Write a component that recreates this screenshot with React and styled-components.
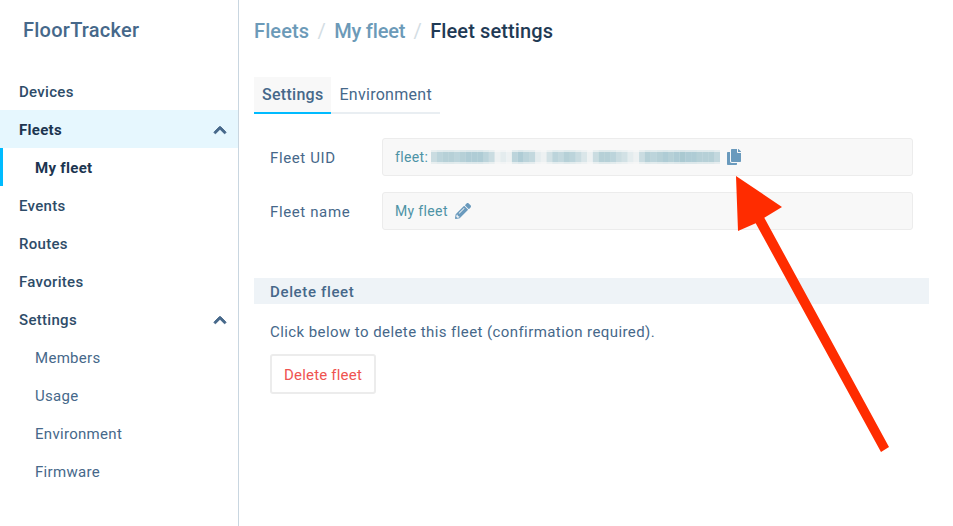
import styled, { createGlobalStyle } from 'styled-components';
import { FaChevronUp, FaCopy, FaPencilAlt } from 'react-icons/fa';

const GlobalStyle = createGlobalStyle`
  html, body {
    margin: 0;
    padding: 0;
    background: #fff;
  }
  body {
    font-family: Roboto, "Liberation Sans", sans-serif;
    color: #3f6080;
  }
`;

const Page = styled.div`
  position: relative;
  display: flex;
  width: 953px;
  height: 526px;
  overflow: hidden;
`;

const Sidebar = styled.nav`
  flex: 0 0 239px;
  box-sizing: border-box;
  border-right: 1px solid #c9d6e0;
`;

const Logo = styled.div`
  height: 72px;
  padding: 19px 0 0 23px;
  box-sizing: border-box;
  font-size: 20px;
  line-height: 22px;
  font-weight: 500;
  letter-spacing: 0.25px;
  color: #46688a;
`;

const NavItem = styled.div`
  position: relative;
  display: flex;
  align-items: center;
  justify-content: space-between;
  box-sizing: border-box;
  height: 38px;
  padding: 2px 11px 0 ${(p) => (p.$sub ? 35 : 19)}px;
  font-size: 15px;
  letter-spacing: 0.3px;
  color: ${(p) => {
    if (p.$current || p.$open) return '#1c3550';
    return p.$sub ? '#46688a' : '#2e4c69';
  }};
  background: ${(p) => (p.$open ? '#e6f7fe' : 'transparent')};
  font-weight: ${(p) => (p.$current || p.$open ? 700 : p.$sub ? 400 : 500)};

  ${(p) =>
    p.$current &&
    `&::before {
      content: '';
      position: absolute;
      left: 0;
      top: 0;
      bottom: 0;
      width: 3px;
      background: #00bbff;
    }`}

  svg {
    width: 14px;
    height: 14px;
    color: #46688a;
    stroke: currentColor;
    stroke-width: 36px;
  }
`;

const Main = styled.main`
  flex: 1;
  padding: 0 24px 0 15px;
`;

const Breadcrumb = styled.div`
  display: flex;
  align-items: center;
  height: 62px;
  font-size: 20px;
  font-weight: 500;
  letter-spacing: 0.12px;
`;

const Crumb = styled.span`
  color: ${(p) => (p.$current ? '#1f3a55' : '#6c9ab8')};
  letter-spacing: ${(p) => (p.$narrow ? '-0.2px' : 'inherit')};
`;

const CrumbSep = styled.span`
  width: 25px;
  text-align: center;
  font-weight: 400;
  color: #d3dde4;
`;

const Tabs = styled.div`
  display: flex;
  width: 186px;
  margin-top: 15px;
  border-bottom: 2px solid #e9eef2;
`;

const Tab = styled.div`
  height: 35px;
  margin-bottom: -2px;
  padding: 0 8px;
  display: flex;
  align-items: center;
  font-size: 16px;
  letter-spacing: 0.28px;
  color: #46688a;
  background: ${(p) => (p.$active ? '#f8f8f8' : 'transparent')};
  border-bottom: 2px solid ${(p) => (p.$active ? '#00bbff' : 'transparent')};
  font-weight: ${(p) => (p.$active ? 500 : 400)};
`;

const Form = styled.div`
  display: flex;
  flex-direction: column;
  gap: 16px;
  margin-top: 24px;
  padding-left: 16px;
`;

const FieldRow = styled.div`
  display: flex;
  align-items: center;
`;

const FieldLabel = styled.div`
  width: 112px;
  padding-top: 1px;
  font-size: 15px;
  letter-spacing: 0.62px;
  color: #46688a;
`;

const FieldValue = styled.div`
  display: flex;
  align-items: center;
  width: 531px;
  height: 38px;
  box-sizing: border-box;
  padding: 0 12px;
  background: #f8f8f8;
  border: 1px solid #ececec;
  border-radius: 3px;
  font-size: 14px;
  letter-spacing: 0.35px;
  color: #4d93a6;

  svg {
    flex: none;
    color: #6a9abd;
  }
`;

const Mosaic = styled.svg`
  display: block;
  margin-left: 3px;
  margin-right: 6px;
  filter: blur(0.6px);
`;

const SectionHeader = styled.div`
  box-sizing: border-box;
  height: 26px;
  margin-top: 48px;
  padding: 2px 0 0 16px;
  display: flex;
  align-items: center;
  background: #eef3f7;
  font-size: 15px;
  font-weight: 500;
  letter-spacing: 0.65px;
  color: #46688a;
`;

const Section = styled.div`
  padding-left: 16px;
`;

const Hint = styled.p`
  margin: 19px 0 13px;
  font-size: 15px;
  line-height: 18px;
  letter-spacing: 0.42px;
  color: #46688a;
`;

const DangerButton = styled.button`
  width: 106px;
  height: 40px;
  padding: 2px 0 0;
  background: #fff;
  border: 2px solid #ececec;
  border-radius: 3px;
  font-family: inherit;
  font-size: 15px;
  letter-spacing: 0.2px;
  color: #ef5350;
`;

const Arrow = styled.svg`
  position: absolute;
  left: 0;
  top: 0;
  pointer-events: none;
`;

const navItems = [
  { label: 'Devices' },
  { label: 'Fleets', open: true, chevron: true },
  { label: 'My fleet', sub: true, current: true },
  { label: 'Events' },
  { label: 'Routes' },
  { label: 'Favorites' },
  { label: 'Settings', chevron: true },
  { label: 'Members', sub: true },
  { label: 'Usage', sub: true },
  { label: 'Environment', sub: true },
  { label: 'Firmware', sub: true },
];

// blurred uid, one value per mosaic cell (1 = nearly blank gap)
const uidCells = [
  5, 7, 8, 8, 7, 8, 9, 9, 9, 7, 5, 1, 2, 1, 7, 9, 7, 6, 2, 1, 4, 7, 6, 8, 7, 5, 3, 1, 5, 8,
  8, 7, 5, 4, 2, 1, 5, 8, 7, 8, 9, 8, 9, 10, 9, 9, 8, 8, 8, 6,
];

const App = () => {
  return (
    <Page>
      <GlobalStyle />
      <Sidebar>
        <Logo>FloorTracker</Logo>
        {navItems.map((item) => (
          <NavItem
            key={item.label}
            $sub={item.sub}
            $open={item.open}
            $current={item.current}
          >
            {item.label}
            {item.chevron && <FaChevronUp />}
          </NavItem>
        ))}
      </Sidebar>
      <Main>
        <Breadcrumb>
          <Crumb>Fleets</Crumb>
          <CrumbSep>/</CrumbSep>
          <Crumb $narrow>My fleet</Crumb>
          <CrumbSep>/</CrumbSep>
          <Crumb $current>Fleet settings</Crumb>
        </Breadcrumb>
        <Tabs>
          <Tab $active>Settings</Tab>
          <Tab>Environment</Tab>
        </Tabs>
        <Form>
          <FieldRow>
            <FieldLabel>Fleet UID</FieldLabel>
            <FieldValue>
              fleet:
              <Mosaic width="289" height="16" viewBox="0 0 289 16">
                {uidCells.map((v, i) => (
                  <g key={i} fill="#a5c6cf">
                    <rect x={i * 5.78} y="1" width="5.8" height="14" opacity={v / 28} />
                    <rect x={i * 5.78} y="3" width="5.8" height="10" opacity={v / 11} />
                  </g>
                ))}
              </Mosaic>
              <FaCopy size={16} />
            </FieldValue>
          </FieldRow>
          <FieldRow>
            <FieldLabel>Fleet name</FieldLabel>
            <FieldValue>
              My fleet
              <FaPencilAlt size={16} style={{ marginLeft: 7 }} />
            </FieldValue>
          </FieldRow>
        </Form>
        <SectionHeader>Delete fleet</SectionHeader>
        <Section>
          <Hint>Click below to delete this fleet (confirmation required).</Hint>
          <DangerButton>Delete fleet</DangerButton>
        </Section>
      </Main>
      <Arrow width="953" height="526" viewBox="0 0 953 526">
        <polygon
          fill="#ff2c00"
          points="736,176 782,207 764.3,217.7 889,447 881,452 755.7,223.3 738,231"
        />
      </Arrow>
    </Page>
  );
};

export default App;
